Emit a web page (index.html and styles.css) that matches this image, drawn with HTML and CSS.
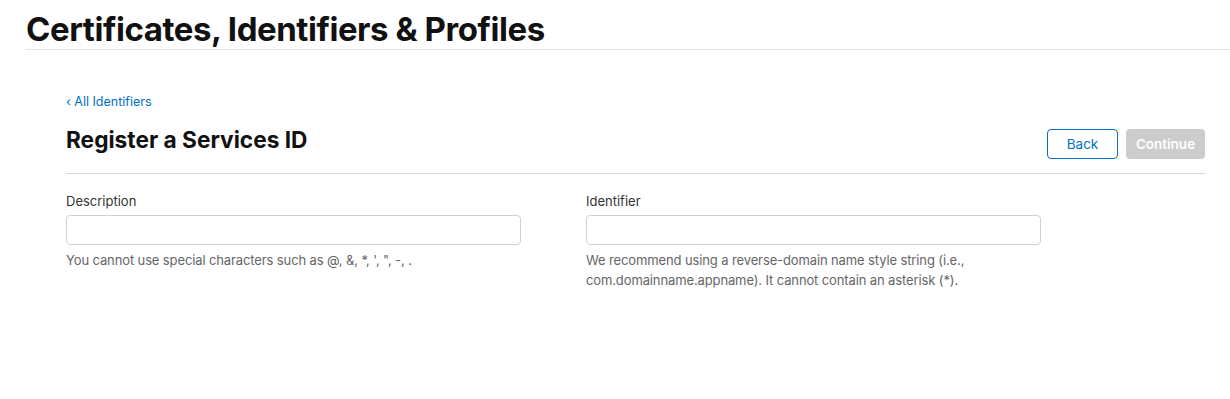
FILE: index.html
```html
<!DOCTYPE html>
<html>
	<head>
		<meta charset="utf-8">
		<title>Register a Services ID</title>
		<link rel="stylesheet" href="styles.css">
	</head>
	<body>
		<div class="pageHeader">
			<h1>Certificates, Identifiers &amp; Profiles</h1>
		</div>
		<div class="mainbody">
			<a class="backLink" href="#">&lsaquo; All Identifiers</a>
			<div class="titleRow">
				<h2>Register a Services ID</h2>
				<div class="actions">
					<button class="btn btnBack">Back</button>
					<button class="btn btnContinue" disabled>Continue</button>
				</div>
			</div>
			<div class="form">
				<div class="field">
					<label for="desc">Description</label>
					<input type="text" id="desc">
					<p class="hint">You cannot use special characters such as @, &amp;, *, ', ", -, .</p>
				</div>
				<div class="field">
					<label for="ident">Identifier</label>
					<input type="text" id="ident">
					<p class="hint">We recommend using a reverse-domain name style string (i.e., com.domainname.appname). It cannot contain an asterisk (*).</p>
				</div>
			</div>
		</div>
	</body>
</html>
```

FILE: styles.css
```css
body{
	margin: 0;
	background: #fff;
	font-family: Inter, "Noto Sans", sans-serif;
	color: #111;
}
.pageHeader{
	margin-left: 26px;
	border-bottom: 1px solid #e5e5e5;
	height: 49px;
}
.pageHeader h1{
	margin: 0;
	padding-top: 9px;
	font-size: 33px;
	line-height: 40px;
	font-weight: 700;
	letter-spacing: -0.45px;
}
.mainbody{
	margin: 0 25px 0 66px;
	padding-top: 44px;
}
.backLink{
	display: block;
	font-size: 12.5px;
	line-height: 16px;
	color: #0070c9;
	text-decoration: none;
}
.titleRow{
	display: flex;
	justify-content: space-between;
	align-items: flex-end;
	border-bottom: 1px solid #d6d6d6;
	padding: 16px 0 14px;
}
.titleRow h2{
	margin: 0 0 5px;
	font-size: 22.7px;
	line-height: 28px;
	font-weight: 700;
}
.actions{
	display: flex;
	gap: 8px;
}
.btn{
	height: 30px;
	border-radius: 4px;
	font-family: inherit;
	font-size: 13.5px;
	padding: 0;
}
.btnBack{
	width: 71px;
	border: 1px solid #0070c9;
	background: #fff;
	color: #0070c9;
}
.btnContinue{
	width: 79px;
	border: 0;
	background: #cccccc;
	color: #fff;
	font-weight: 600;
}
.form{
	display: flex;
	gap: 65px;
	padding-top: 19px;
}
.field{
	width: 455px;
}
.field label{
	display: block;
	font-size: 13px;
	line-height: 16px;
	color: #333;
	margin-bottom: 6px;
}
.field input{
	display: block;
	box-sizing: border-box;
	width: 455px;
	height: 30px;
	border: 1px solid #d2d2d2;
	border-radius: 4px;
	margin: 0;
}
.hint{
	margin: 5px 0 0;
	font-size: 13px;
	letter-spacing: -0.12px;
	line-height: 20px;
	color: #666;
}
```
